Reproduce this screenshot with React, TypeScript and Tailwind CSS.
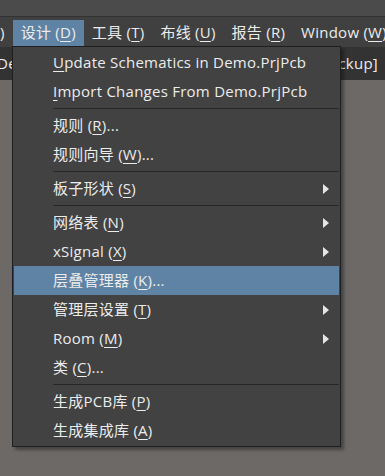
import React from 'react'

const font = { fontFamily: '"Open Sans", "Noto Sans CJK SC", sans-serif' }

type Item = { label: string; key: string; tail?: string; sub?: boolean; active?: boolean } | 'sep'

// label is split on the mnemonic (last match) so the letter can be underlined
function Label({ label, k, tail }: { label: string; k: string; tail?: string }) {
    const i = k ? label.lastIndexOf(k) : -1
    if (i < 0) return <span>{label}</span>
    return (
        <span className="whitespace-pre">
            {label.slice(0, i)}
            <span className="underline underline-offset-[3px]">{k}</span>
            {label.slice(i + 1)}
            {tail}
        </span>
    )
}

const items: Item[] = [
    { label: 'Update Schematics in Demo.PrjPcb', key: 'U' },
    { label: 'Import Changes From Demo.PrjPcb', key: 'I' },
    'sep',
    { label: '规则 (R)', key: 'R', tail: '...' },
    { label: '规则向导 (W)', key: 'W', tail: '...' },
    'sep',
    { label: '板子形状 (S)', key: 'S', sub: true },
    'sep',
    { label: '网络表 (N)', key: 'N', sub: true },
    { label: 'xSignal (X)', key: 'X', sub: true },
    { label: '层叠管理器 (K)', key: 'K', tail: '...', active: true },
    { label: '管理层设置 (T)', key: 'T', sub: true },
    { label: 'Room (M)', key: 'M', sub: true },
    { label: '类 (C)', key: 'C', tail: '...' },
    'sep',
    { label: '生成PCB库 (P)', key: 'P' },
    { label: '生成集成库 (A)', key: 'A' },
]

const bar = [
    { label: ')', key: '' },
    { label: '设计 (D)', key: 'D', active: true },
    { label: '工具 (T)', key: 'T' },
    { label: '布线 (U)', key: 'U' },
    { label: '报告 (R)', key: 'R' },
    { label: 'Window (W)', key: 'W' },
]

export default function App() {
    return (
        <div className="relative w-[385px] h-[476px] overflow-hidden bg-[#6c6967] text-[15px] tracking-[0.25px] text-[#ececec]" style={font}>
            <div className="h-[16px] bg-[#4b4b4b]" />
            <div className="h-[1px] bg-[#333333]" />
            <div className="flex h-[30px] bg-[#404040] pt-[3px] whitespace-nowrap">
                <div className="flex h-[27px] -ml-[8px]">
                    {bar.map((b, i) => (
                        <div key={i} className={`flex items-center px-2 leading-none pb-[2px] ${b.active ? 'bg-[#5f83a4]' : ''}`}>
                            <Label label={b.label} k={b.key} />
                        </div>
                    ))}
                </div>
            </div>
            <div className="flex justify-between items-center h-[33px] bg-[#333333] whitespace-nowrap">
                <span className="-ml-[3px]">De</span>
                <span className="pr-[7px]">[backup]</span>
            </div>

            {/* dropdown */}
            <div className="absolute left-[12px] top-[46px] w-[329px] border border-[#1f1f1f] bg-[#424242] p-[1px] shadow-[3px_3px_3px_rgba(0,0,0,0.35)]">
                {items.map((it, i) =>
                    it === 'sep' ? (
                        <div key={i} className="h-[5px] flex items-center pl-[39px]">
                            <div className="h-[1px] w-full bg-[#262626]" />
                        </div>
                    ) : (
                        <div
                            key={i}
                            className={`flex items-center justify-between h-[29px] pl-[39px] pr-[10px] whitespace-nowrap ${it.active ? 'bg-[#5f83a4]' : ''}`}
                        >
                            <Label label={it.label} k={it.key} tail={it.tail} />
                            {it.sub && (
                                <svg width="6" height="10" viewBox="0 0 6 10">
                                    <path d="M0 0 L6 5 L0 10 Z" fill="#e6e6e6" />
                                </svg>
                            )}
                        </div>
                    )
                )}
            </div>
        </div>
    )
}
